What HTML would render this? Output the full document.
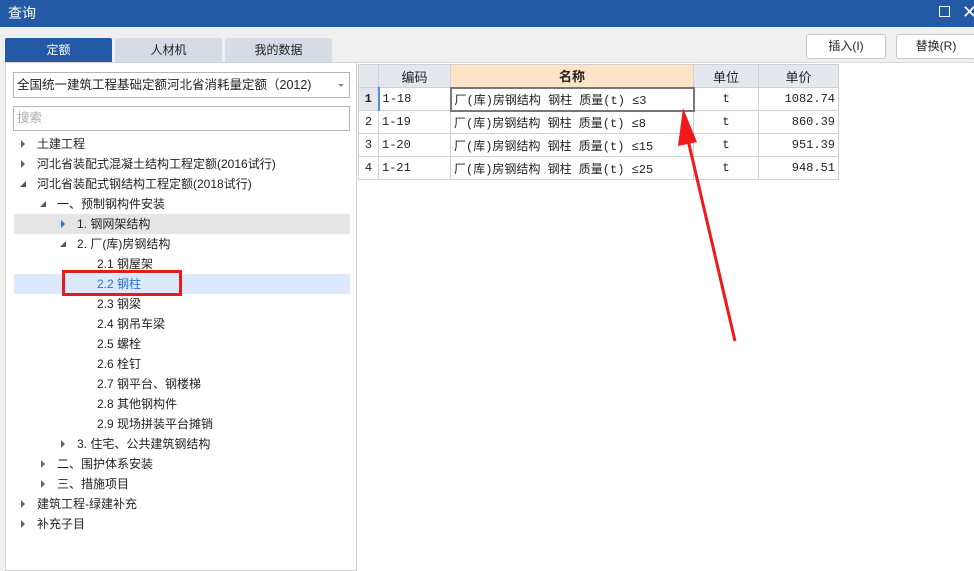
<!DOCTYPE html>
<html><head><meta charset="utf-8"><style>
*{margin:0;padding:0;box-sizing:border-box}
body{width:974px;height:571px;overflow:hidden;background:#f0f0f0;font-family:"Liberation Sans","Noto Sans CJK SC",sans-serif;font-size:12px;color:#222;position:relative}
.abs{position:absolute}
.title{left:0;top:0;width:974px;height:27px;background:#2459a5;color:#fff;font-size:14px;line-height:27px;padding-left:8px}
.tab{top:38px;height:25px;width:107px;text-align:center;line-height:25px;font-size:12px;background:#d5dce6;border-radius:2px 2px 0 0}
.left{left:5px;top:62px;width:352px;height:509px;background:#fff;border:1px solid #cfcfcf}
.inp{left:13px;width:337px;border:1px solid #b5b5b5;background:#fff;padding-left:3px}
.tr{position:absolute;height:20px;line-height:20px;font-size:12px;white-space:nowrap}
.ar{position:absolute;width:0;height:0}
.rt{border-left:4px solid #666;border-top:4px solid transparent;border-bottom:4px solid transparent}
.dn{border-right:6px solid #555;border-top:6px solid transparent}
.btn{top:34px;height:25px;background:#fff;border:1px solid #c8c8c8;border-radius:3px;text-align:center;line-height:23px;font-size:12px}
table{border-collapse:collapse;position:absolute;left:358px;top:64px;font-size:12px}
td{border:1px solid #d0d0d0;height:23px;padding:0 3px;white-space:nowrap;font-family:"Liberation Mono","Noto Sans CJK SC",monospace;font-size:12px}
th{border:1px solid #d0d0d0;height:23px;background:#e3e8f0;font-weight:normal;font-size:13px}
</style></head><body>
<div class="abs title">查询</div>
<div class="abs" style="left:939px;top:6px;width:11px;height:11px;border:1.5px solid #fff"></div>
<div class="abs" style="left:962px;top:0;color:#fff;font-size:18px;line-height:25px">✕</div>
<div class="abs tab" style="left:5px;background:#2459a5;color:#fff">定额</div>
<div class="abs tab" style="left:115px">人材机</div>
<div class="abs tab" style="left:225px">我的数据</div>
<div class="abs left"></div>
<div class="abs inp" style="top:72px;height:26px;line-height:24px;font-size:12.5px">全国统一建筑工程基础定额河北省消耗量定额（2012)</div>
<div class="abs" style="left:338px;top:84px;border-left:3px solid transparent;border-right:3px solid transparent;border-top:3px solid #888"></div>
<div class="abs inp" style="top:106px;height:25px;line-height:23px;color:#aaa;font-size:12.5px">搜索</div>
<div class="abs" style="left:14px;top:214px;width:336px;height:20px;background:#e5e5e5"></div>
<div class="abs" style="left:14px;top:274px;width:336px;height:20px;background:#dce8fb"></div>

<div class="ar rt" style="left:21px;top:140px"></div><div class="tr" style="left:37px;top:134px">土建工程</div>
<div class="ar rt" style="left:21px;top:160px"></div><div class="tr" style="left:37px;top:154px">河北省装配式混凝土结构工程定额(2016试行)</div>
<div class="ar dn" style="left:20px;top:181px"></div><div class="tr" style="left:37px;top:174px">河北省装配式钢结构工程定额(2018试行)</div>
<div class="ar dn" style="left:40px;top:201px"></div><div class="tr" style="left:57px;top:194px">一、预制钢构件安装</div>
<div class="ar rt" style="left:61px;top:220px;border-left-color:#2a6fd0"></div><div class="tr" style="left:77px;top:214px">1. 钢网架结构</div>
<div class="ar dn" style="left:60px;top:241px"></div><div class="tr" style="left:77px;top:234px">2. 厂(库)房钢结构</div>
<div class="tr" style="left:97px;top:254px">2.1 钢屋架</div>
<div class="tr" style="left:97px;top:274px;color:#2a6fd0">2.2 钢柱</div>
<div class="tr" style="left:97px;top:294px">2.3 钢梁</div>
<div class="tr" style="left:97px;top:314px">2.4 钢吊车梁</div>
<div class="tr" style="left:97px;top:334px">2.5 螺栓</div>
<div class="tr" style="left:97px;top:354px">2.6 栓钉</div>
<div class="tr" style="left:97px;top:374px">2.7 钢平台、钢楼梯</div>
<div class="tr" style="left:97px;top:394px">2.8 其他钢构件</div>
<div class="tr" style="left:97px;top:414px">2.9 现场拼装平台摊销</div>
<div class="ar rt" style="left:61px;top:440px"></div><div class="tr" style="left:77px;top:434px">3. 住宅、公共建筑钢结构</div>
<div class="ar rt" style="left:41px;top:460px"></div><div class="tr" style="left:57px;top:454px">二、围护体系安装</div>
<div class="ar rt" style="left:41px;top:480px"></div><div class="tr" style="left:57px;top:474px">三、措施项目</div>
<div class="ar rt" style="left:21px;top:500px"></div><div class="tr" style="left:37px;top:494px">建筑工程-绿建补充</div>
<div class="ar rt" style="left:21px;top:520px"></div><div class="tr" style="left:37px;top:514px">补充子目</div>
<div class="abs" style="left:62px;top:270px;width:120px;height:26px;border:3px solid #e51c1c"></div>

<div class="abs" style="left:357px;top:62px;width:617px;height:509px;background:#fff;border-top:1px solid #d8d8d8"></div>
<div class="abs btn" style="left:806px;width:80px">插入(I)</div>
<div class="abs btn" style="left:896px;width:80px">替换(R)</div>
<table>
<tr><th style="width:20px"></th><th style="width:72px">编码</th><th style="width:243px;background:#fde4c6;font-weight:bold">名称</th><th style="width:65px">单位</th><th style="width:80px">单价</th></tr>
<tr><td style="background:#e3e8f0;font-weight:bold;text-align:center;padding:0">1</td><td style="border-left:2px solid #4a8fe0">1-18</td><td style="border:2px solid #777">厂(库)房钢结构 钢柱 质量(t) ≤3</td><td style="text-align:center">t</td><td style="text-align:right">1082.74</td></tr>
<tr><td style="text-align:center;padding:0">2</td><td>1-19</td><td>厂(库)房钢结构 钢柱 质量(t) ≤8</td><td style="text-align:center">t</td><td style="text-align:right">860.39</td></tr>
<tr><td style="text-align:center;padding:0">3</td><td>1-20</td><td>厂(库)房钢结构 钢柱 质量(t) ≤15</td><td style="text-align:center">t</td><td style="text-align:right">951.39</td></tr>
<tr><td style="text-align:center;padding:0">4</td><td>1-21</td><td>厂(库)房钢结构 钢柱 质量(t) ≤25</td><td style="text-align:center">t</td><td style="text-align:right">948.51</td></tr>
</table>
<svg class="abs" style="left:0;top:0" width="974" height="571">
<line x1="735" y1="341" x2="688" y2="140" stroke="#f01818" stroke-width="3"/>
<polygon points="683,108 678,146 697,142" fill="#f01818"/>
</svg>
</body></html>
